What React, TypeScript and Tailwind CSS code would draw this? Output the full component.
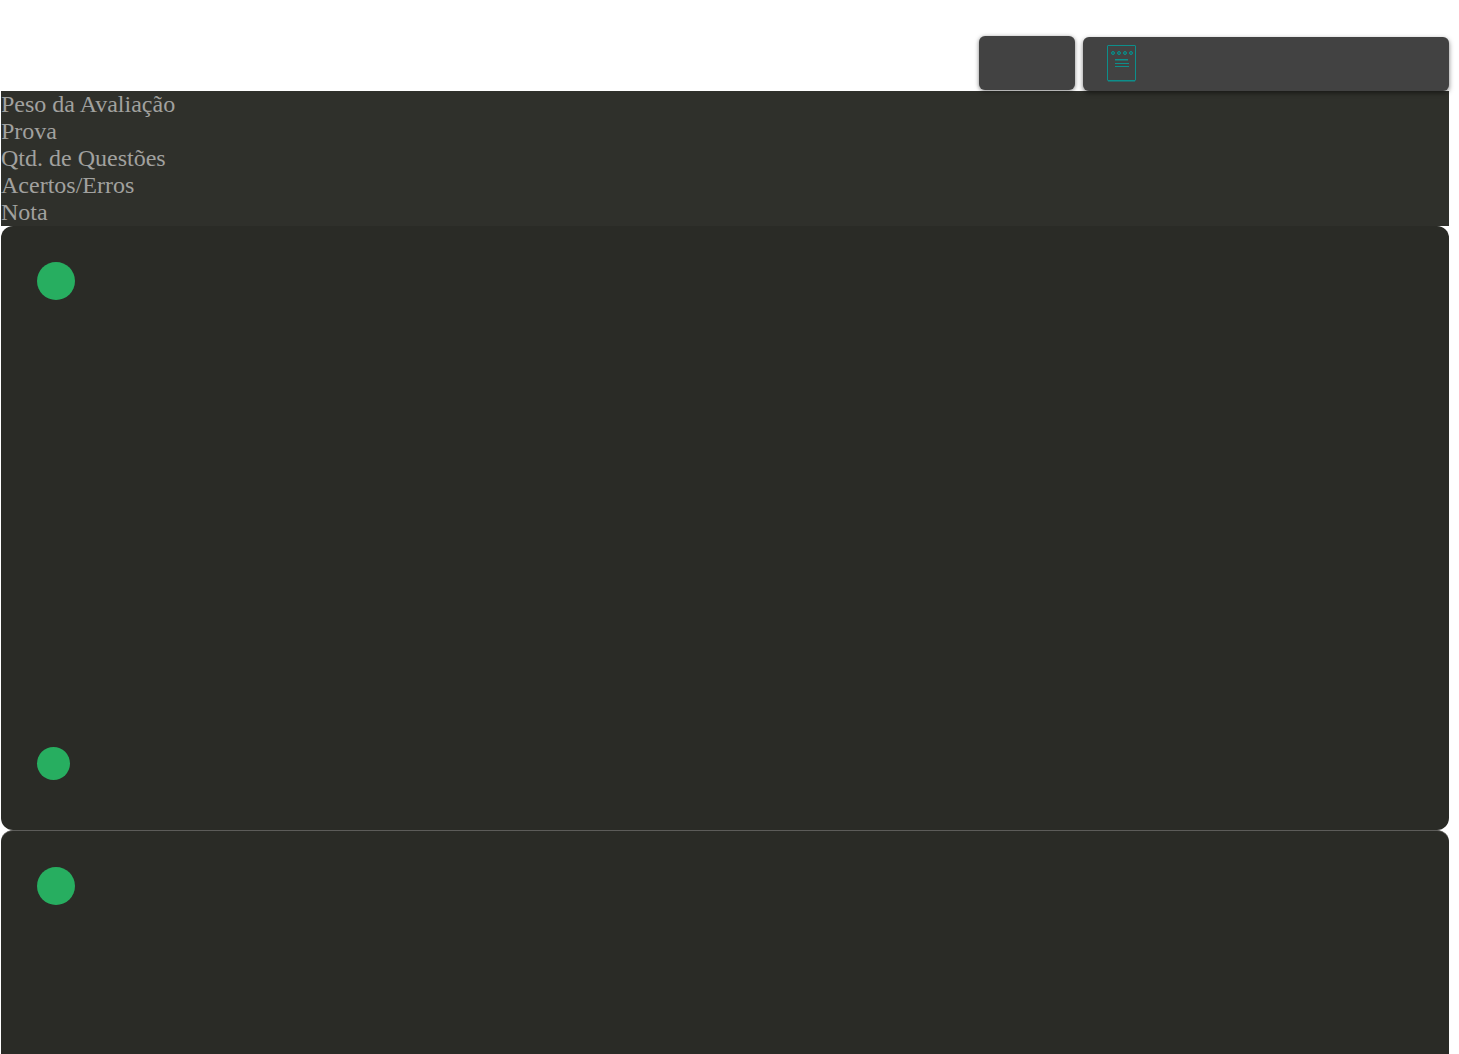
const columns = [
  'Peso da Avaliação',
  'Prova',
  'Qtd. de Questões',
  'Acertos/Erros',
  'Nota',
];

function NotebookIcon() {
  return (
    <svg width="30" height="38" viewBox="0 0 30 38" fill="none" stroke="#0d8f8b" aria-hidden="true">
      <rect x="0.5" y="0.5" width="28" height="35" rx="0.5" />
      <g fill="#1b6664">
        <circle cx="6" cy="8" r="1.5" />
        <circle cx="12" cy="8" r="1.5" />
        <circle cx="18" cy="8" r="1.5" />
        <circle cx="24" cy="8" r="1.5" />
      </g>
      <path d="M8 14.5h13M8 18.5h14M8 21.5h14" />
      <path d="M8 15.5h13M1 36.5h27" strokeOpacity="0.5" />
    </svg>
  );
}

function Toolbar() {
  return (
    <div className="flex items-end justify-end gap-2 pt-9">
      <button
        type="button"
        aria-label="Voltar"
        className="mb-px h-[54px] w-24 rounded-md bg-[#424242] shadow-[0_1px_4px_rgba(0,0,0,0.5)]"
      />
      <button
        type="button"
        aria-label="Provas"
        className="relative flex h-[54px] w-[366px] items-center rounded-md bg-[#424242] px-6 shadow-[0_2px_5px_rgba(0,0,0,0.5)]"
      >
        <NotebookIcon />
      </button>
    </div>
  );
}

export default function App() {
  return (
    <div className="min-h-screen bg-white pl-px pr-[10px] font-['Liberation_Serif',serif]">
      <Toolbar />

      {/* Column headings */}
      <ul className="bg-[#2f302b] text-[24px] leading-[normal] text-[#a1a19f]">
        {columns.map((column) => (
          <li key={column}>{column}</li>
        ))}
      </ul>

      {/* Evaluation cards */}
      <section className="flex min-h-[604px] flex-col justify-between rounded-xl bg-[#2a2b26] px-9 pb-[50px] pt-9">
        <span className="size-[38px] rounded-full bg-[#27ae60]" />
        <span className="size-[33px] rounded-full bg-[#27ae60]" />
      </section>
      <section className="min-h-56 rounded-t-xl border-t border-[#5c5c59] bg-[#2a2b26] px-9 pt-9">
        <span className="block size-[38px] rounded-full bg-[#27ae60]" />
      </section>
    </div>
  );
}
